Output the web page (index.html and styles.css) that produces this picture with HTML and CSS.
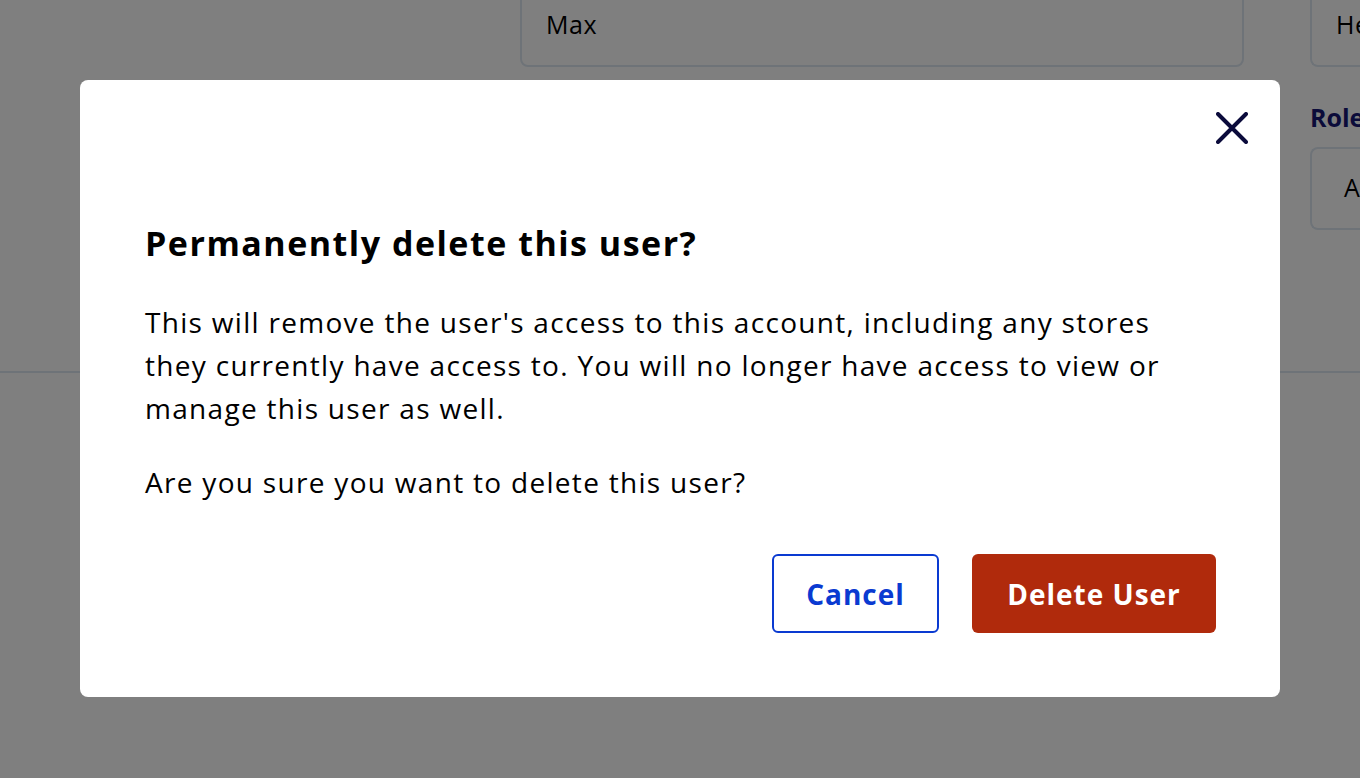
FILE: index.html
```html
<!DOCTYPE html>
<html lang="en">
<head>
<meta charset="utf-8">
<title>Delete user</title>
<link rel="stylesheet" href="styles.css">
</head>
<body>
<div class="page">
  <section class="form-area">
    <div class="field-row top-row">
      <div class="spacer"></div>
      <div class="field wide"><div class="input">Max</div></div>
      <div class="field narrow"><div class="input">He</div></div>
    </div>
    <div class="field-row second-row">
      <div class="spacer"></div>
      <div class="field wide"></div>
      <div class="field narrow">
        <div class="label">Role</div>
        <div class="input select">A</div>
      </div>
    </div>
  </section>
  <div class="divider"></div>
</div>

<div class="overlay">
  <div class="modal" role="dialog" aria-labelledby="modal-title">
    <div class="modal-head">
      <button class="close" aria-label="Close">
        <svg width="32" height="32" viewBox="0 0 32 32" fill="none" stroke="#0b0b3b" stroke-width="4" stroke-linecap="round">
          <path d="M2 2 L30 30 M30 2 L2 30"/>
        </svg>
      </button>
    </div>
    <h2 id="modal-title" class="title">Permanently delete this user?</h2>
    <p class="text">This will remove the user's access to this account, including any stores they currently have access to. You will no longer have access to view or manage this user as well.</p>
    <p class="text second">Are you sure you want to delete this user?</p>
    <div class="actions">
      <button class="btn cancel">Cancel</button>
      <button class="btn danger">Delete User</button>
    </div>
  </div>
</div>
</body>
</html>
```

FILE: styles.css
```css
* { box-sizing: border-box; }
html, body { margin: 0; padding: 0; }
body {
  width: 1360px;
  height: 778px;
  overflow: hidden;
  background: #ffffff;
  font-family: "Open Sans", "Noto Sans", sans-serif;
  color: #000;
}
.page { width: 1360px; height: 778px; }
.form-area { height: 371px; display: flex; flex-direction: column; }
.field-row { display: flex; gap: 66px; }
.spacer { width: 454px; flex: none; }
.field.wide { width: 724px; flex: none; }
.field.narrow { flex: 1; }
.top-row { margin-top: -20px; }
.input {
  height: 87px;
  border: 2px solid #dde6f0;
  border-radius: 8px;
  font-size: 25px;
  letter-spacing: 0.5px;
  padding: 20px 0 0 24px;
  color: #000;
}
.top-row .input { padding-top: 25px; }
.second-row { margin-top: 30px; }
.label {
  font-size: 25px;
  font-weight: 700;
  color: #161675;
  height: 50px;
  line-height: 40px;
}
.select { height: 83px; padding: 21px 0 0 32px; }
.field.narrow .input { border-right: none; border-top-right-radius: 0; border-bottom-right-radius: 0; }
.divider { height: 2px; background: #dde6f0; }

.overlay {
  position: fixed;
  inset: 0;
  background: rgba(0, 0, 0, 0.5);
  display: flex;
  justify-content: center;
  padding-top: 80px;
}
.modal {
  width: 1200px;
  height: 617px;
  background: #fff;
  border-radius: 8px;
  padding: 24px 64px 64px 65px;
  display: flex;
  flex-direction: column;
}
.modal-head { display: flex; justify-content: flex-end; margin-right: -40px; height: 48px; }
.close {
  width: 48px; height: 48px;
  border: none; background: none; padding: 0;
  display: flex; align-items: center; justify-content: center;
  cursor: pointer;
}
.title {
  margin: 71px 0 0 0;
  font-size: 34px;
  letter-spacing: 1.5px;
  line-height: 40px;
  font-weight: 700;
  color: #000;
}
.text {
  margin: 38px 0 0 0;
  font-size: 28px;
  letter-spacing: 1.3px;
  line-height: 43px;
  color: #000;
  max-width: 1030px;
}
.text.second { margin-top: 31px; }
.actions {
  margin-top: auto;
  display: flex;
  justify-content: flex-end;
  gap: 33px;
}
.btn {
  height: 79px;
  border-radius: 6px;
  font-family: inherit;
  font-size: 28px;
  letter-spacing: 1px;
  font-weight: 700;
  padding: 0;
  cursor: pointer;
}
.cancel {
  width: 167px;
  background: #fff;
  color: #0a3ad1;
  border: 2px solid #0a3ad1;
}
.danger {
  width: 244px;
  background: #b02a0c;
  color: #fff;
  border: none;
}
```
